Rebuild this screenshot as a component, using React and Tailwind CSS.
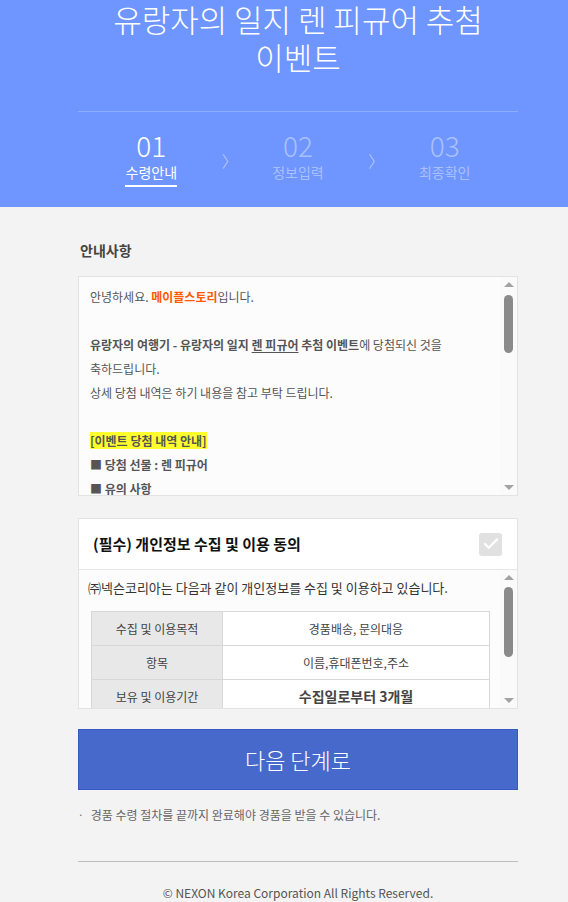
import { Check } from "lucide-react";

const font = "font-['Noto_Sans_CJK_KR','Noto_Sans',sans-serif]";

function Scrollbar({ thumbTop, thumbHeight }) {
  return (
    <div className="relative w-[17px] shrink-0 bg-[#fafafa]">
      <div className="absolute left-[4px] top-[5px] h-0 w-0 border-x-[5px] border-b-[5px] border-x-transparent border-b-[#a3a3a3]" />
      <div
        className="absolute left-[4px] w-[9px] rounded-full bg-[#8a8a8a]"
        style={{ top: thumbTop, height: thumbHeight }}
      />
      <div className="absolute bottom-[5px] left-[4px] h-0 w-0 border-x-[5px] border-t-[5px] border-x-transparent border-t-[#a3a3a3]" />
    </div>
  );
}

function Step({ num, label, active }) {
  return (
    <div className="flex flex-col items-center">
      <span
        className={`text-[28px] font-light leading-[34px] ${
          active ? "text-white" : "text-[#a9c0ff]"
        }`}
      >
        {num}
      </span>
      <span
        className={`text-[14px] leading-[20px] ${
          active ? "text-white" : "text-[#a9c0ff]"
        }`}
      >
        {label}
      </span>
      <div className={`mt-[3px] h-[2px] w-[52px] ${active ? "bg-white" : "bg-transparent"}`} />
    </div>
  );
}

export default function App() {
  const rows = [
    ["수집 및 이용목적", "경품배송, 문의대응"],
    ["항목", "이름,휴대폰번호,주소"],
    ["보유 및 이용기간", "수집일로부터 3개월"],
  ];

  return (
    <div className={`${font} min-h-[902px] w-[568px] overflow-hidden bg-[#f3f3f3]`}>
      <div className="w-[596px]">
        {/* Header */}
        <div className="bg-[#6f96fe] pb-[20px]">
          <h1 className="text-center text-[31px] font-light leading-[38px] text-white">
            유랑자의 일지 렌 피규어 추첨
            <br />
            이벤트
          </h1>
          <div className="mx-[78px] mt-[35px] border-t border-[#8eacfd] pt-[16px]">
            <div className="grid grid-cols-3">
              <div className="relative flex justify-center">
                <Step num="01" label="수령안내" active />
                <span className="absolute right-[-13px] top-[20px] text-[16px] font-light text-[#c5d5ff]">〉</span>
              </div>
              <div className="relative flex justify-center">
                <Step num="02" label="정보입력" />
                <span className="absolute right-[-13px] top-[20px] text-[16px] font-light text-[#c5d5ff]">〉</span>
              </div>
              <div className="flex justify-center">
                <Step num="03" label="최종확인" />
              </div>
            </div>
          </div>
        </div>

        <div className="mx-[78px]">
          {/* Notice */}
          <h2 className="mt-[31px] pl-[2px] text-[14px] font-bold leading-[24px] text-[#444]">안내사항</h2>
          <div className="mt-[14px] flex h-[220px] border border-[#e3e3e3] bg-[#fcfcfc]">
            <div className="flex-1 overflow-hidden px-[11px] pt-[8px] text-[12px] leading-[24px] text-[#555]">
              <p>
                안녕하세요. <b className="text-[#ff5a00]">메이플스토리</b>입니다.
              </p>
              <p>&nbsp;</p>
              <p>
                <b>유랑자의 여행기 - 유랑자의 일지 </b>
                <b className="underline underline-offset-2">렌 피규어</b>
                <b> 추첨 이벤트</b>에 당첨되신 것을
                <br />
                축하드립니다.
              </p>
              <p>상세 당첨 내역은 하기 내용을 참고 부탁 드립니다.</p>
              <p>&nbsp;</p>
              <p>
                <b className="bg-[#ffff2e]">[이벤트 당첨 내역 안내]</b>
              </p>
              <p>
                <b>■ 당첨 선물 : 렌 피규어</b>
              </p>
              <p>
                <b>■ 유의 사항</b>
              </p>
            </div>
            <Scrollbar thumbTop={18} thumbHeight={58} />
          </div>

          {/* Agreement */}
          <div className="mt-[22px] border border-[#e3e3e3] bg-white">
            <div className="flex h-[51px] items-center justify-between border-b border-[#e6e6e6] pl-[14px] pr-[15px]">
              <span className="text-[15px] font-bold text-[#111]">(필수) 개인정보 수집 및 이용 동의</span>
              <div className="flex h-[23px] w-[23px] items-center justify-center rounded-[3px] bg-[#e1e1e1]">
                <Check size={18} strokeWidth={3} className="text-white" />
              </div>
            </div>
            <div className="flex h-[138px] bg-[#fcfcfc]">
              <div className="flex-1 overflow-hidden pl-[9px] pr-[10px] pt-[7px]">
                <p className="text-[13px] leading-[22px] text-[#333]">
                  ㈜넥슨코리아는 다음과 같이 개인정보를 수집 및 이용하고 있습니다.
                </p>
                <table className="ml-[3px] mt-[12px] w-[399px] border-collapse text-[12px] text-[#444]">
                  <tbody>
                    {rows.map(([k, v], i) => (
                      <tr key={k} className="h-[34px]">
                        <td className="w-[131px] border border-[#d8d8d8] bg-[#e8e8e8] text-center">{k}</td>
                        <td
                          className={`border border-[#d8d8d8] bg-white text-center ${
                            i === 2 ? "text-[14px] font-bold text-[#444]" : ""
                          }`}
                        >
                          {v}
                        </td>
                      </tr>
                    ))}
                  </tbody>
                </table>
              </div>
              <Scrollbar thumbTop={17} thumbHeight={70} />
            </div>
          </div>

          {/* Button */}
          <button
            type="button"
            className="mt-[20px] flex h-[61px] w-full items-center justify-center border border-[#3659c2] bg-[#4769cc] text-[22px] font-light text-white"
          >
            다음 단계로
          </button>

          <p className="mt-[16px] flex items-center text-[12px] leading-[18px] text-[#666]">
            <span className="mr-[7px] text-[10px]">·</span>
            경품 수령 절차를 끝까지 완료해야 경품을 받을 수 있습니다.
          </p>

          <div className="mt-[37px] border-t border-[#bdbdbd]" />
          <p className="pt-[22px] text-center text-[12px] leading-[18px] text-[#555]">
            © NEXON Korea Corporation All Rights Reserved.
          </p>
        </div>
      </div>
    </div>
  );
}
